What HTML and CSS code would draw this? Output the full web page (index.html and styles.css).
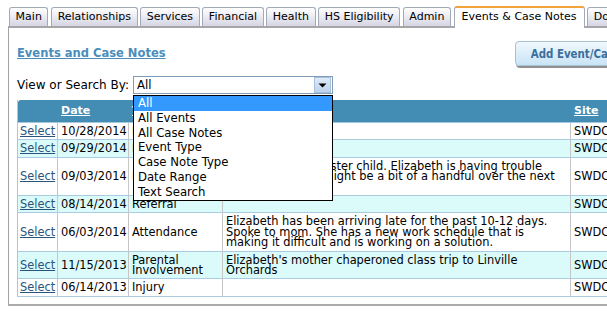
FILE: index.html
```html
<!DOCTYPE html>
<html lang="en">
<head>
<meta charset="utf-8">
<title>Events and Case Notes</title>
<link rel="stylesheet" href="styles.css">
</head>
<body>
<div class="page">
  <div class="tabs">
    <div class="tab">Main</div>
    <div class="tab">Relationships</div>
    <div class="tab">Services</div>
    <div class="tab">Financial</div>
    <div class="tab">Health</div>
    <div class="tab">HS Eligibility</div>
    <div class="tab">Admin</div>
    <div class="tab active">Events &amp; Case Notes</div>
    <div class="tab">Documents</div>
  </div>
  <div class="panel">
    <div class="panel-inner">
      <div class="head-row">
        <a class="title" href="#">Events and Case Notes</a>
        <button class="add-btn" type="button">Add Event/Case Note</button>
      </div>
      <div class="filter-row">
        <span class="filter-label">View or Search By:</span>
        <div class="combo">
          <div class="combo-box">
            <span class="combo-value">All</span>
            <span class="combo-btn"><svg width="9" height="5" viewBox="0 0 9 5"><path d="M0.5 0.5 H8.5 L4.5 4.5 Z" fill="#000"/></svg></span>
          </div>
          <ul class="combo-list">
            <li class="selected">All</li>
            <li>All Events</li>
            <li>All Case Notes</li>
            <li>Event Type</li>
            <li>Case Note Type</li>
            <li>Date Range</li>
            <li>Text Search</li>
          </ul>
        </div>
      </div>
      <table class="grid">
        <colgroup>
          <col class="c-sel"><col class="c-date"><col class="c-type"><col class="c-notes"><col class="c-site">
        </colgroup>
        <thead>
          <tr>
            <th></th>
            <th><a href="#">Date</a></th>
            <th><a href="#">Type</a></th>
            <th><a href="#">Notes</a></th>
            <th><a href="#">Site</a></th>
          </tr>
        </thead>
        <tbody>
          <tr>
            <td><a href="#">Select</a></td><td>10/28/2014</td><td>Incident</td><td></td><td>SWDC</td>
          </tr>
          <tr class="alt">
            <td><a href="#">Select</a></td><td>09/29/2014</td><td>Home Visit</td><td></td><td>SWDC</td>
          </tr>
          <tr>
            <td><a href="#">Select</a></td><td>09/03/2014</td><td>Family Change</td><td>Family took in a foster child. Elizabeth is having trouble adjusting so she might be a bit of a handful over the next few weeks.</td><td>SWDC</td>
          </tr>
          <tr class="alt">
            <td><a href="#">Select</a></td><td>08/14/2014</td><td>Referral</td><td></td><td>SWDC</td>
          </tr>
          <tr>
            <td><a href="#">Select</a></td><td>06/03/2014</td><td>Attendance</td><td>Elizabeth has been arriving late for the past 10-12 days. Spoke to mom. She has a new work schedule that is making it difficult and is working on a solution.</td><td>SWDC</td>
          </tr>
          <tr class="alt">
            <td><a href="#">Select</a></td><td>11/15/2013</td><td>Parental Involvement</td><td>Elizabeth's mother chaperoned class trip to Linville Orchards</td><td>SWDC</td>
          </tr>
          <tr>
            <td><a href="#">Select</a></td><td>06/14/2013</td><td>Injury</td><td></td><td>SWDC</td>
          </tr>
        </tbody>
      </table>
    </div>
  </div>
</div>
</body>
</html>
```

FILE: styles.css
```css
html, body {
  margin: 0;
  padding: 0;
  overflow: hidden;
  background: #ffffff;
}

body {
  font-family: "DejaVu Sans", Verdana, sans-serif;
  font-size: 11px;
  color: #000000;
}

.page {
  width: 760px;
  padding: 6px 0 0 8px;
}

/* ---------- tabs ---------- */
.tabs {
  display: flex;
  align-items: flex-start;
  gap: 2.6px;
  padding-left: 1px;
  height: 20px;
  border-bottom: 2px solid #a6a6a6;
}

.tab {
  flex: none;
  box-sizing: border-box;
  height: 19px;
  margin-top: 1px;
  padding: 0 5.6px;
  border: 1px solid #a2aab8;
  border-bottom: none;
  border-radius: 3px 3px 0 0;
  background: linear-gradient(#ffffff 0%, #ececf3 45%, #d6d6e4 100%);
  line-height: 17px;
  white-space: nowrap;
}

.tab.active {
  position: relative;
  z-index: 1;
  height: 22px;
  margin-top: 0;
  margin-bottom: -2px;
  padding: 0 7px;
  border-top: 2px solid #f2a33a;
  background: #ffffff;
}

/* ---------- panel ---------- */
.panel {
  width: 720px;
  border-left: 1px solid #a3a3a3;
  border-bottom: 2px solid #ababab;
  padding: 13px 0 7px 8px;
}

.panel-inner {
  width: 652px;
}

.head-row {
  display: flex;
  justify-content: space-between;
  align-items: flex-start;
}

.title {
  margin-top: 4px;
  font-family: "DejaVu Sans Condensed", "DejaVu Sans", sans-serif;
  font-weight: bold;
  font-size: 12.8px;
  line-height: 16px;
  color: #4a8dbd;
  text-decoration: underline;
}

.add-btn {
  box-sizing: border-box;
  height: 25px;
  padding: 1px 16px 0 15px;
  border: 1px solid #a8c0d4;
  border-radius: 4px;
  background: linear-gradient(#f0f8fd, #c9e4f5);
  box-shadow: 1px 2px 0 #8f8f8f;
  font-family: "DejaVu Sans Condensed", "DejaVu Sans", sans-serif;
  font-weight: bold;
  font-size: 11.4px;
  line-height: 22px;
  color: #3b6f9c;
}

/* ---------- filter ---------- */
.filter-row {
  display: flex;
  align-items: center;
  gap: 4px;
  margin-top: 10px;
  font-size: 12px;
}

.filter-label {
  line-height: 14px;
}

.combo {
  position: relative;
  width: 200px;
}

.combo-box {
  box-sizing: border-box;
  display: flex;
  align-items: center;
  height: 18px;
  border: 1px solid #7f9db9;
  background: #ffffff;
  font-size: 11.7px;
}

.combo-value {
  flex: 1;
  padding-left: 3px;
  line-height: 16px;
}

.combo-btn {
  box-sizing: border-box;
  display: flex;
  align-items: center;
  justify-content: center;
  width: 17px;
  height: 16px;
  margin-right: 1px;
  border: 1px solid #a9c0dc;
  background: linear-gradient(#dfeaf7, #bcd3ee);
}

.combo-list {
  position: absolute;
  z-index: 5;
  top: 19px;
  left: 0;
  box-sizing: border-box;
  width: 200px;
  margin: 0;
  padding: 0;
  list-style: none;
  border: 1px solid #000000;
  background: #ffffff;
  font-size: 11.7px;
}

.combo-list li {
  height: 14.8px;
  padding-left: 4px;
  line-height: 14.8px;
  white-space: nowrap;
}

.combo-list li.selected {
  background: #3399ff;
  color: #ffffff;
}

/* ---------- grid ---------- */
.grid {
  width: 652px;
  margin-top: 6px;
  table-layout: fixed;
  border-collapse: separate;
  border-spacing: 0;
  border-left: 1px solid #a6c8de;
}

.c-sel { width: 40px; }
.c-date { width: 71px; }
.c-type { width: 94px; }
.c-notes { width: 348px; }
.c-site { width: 98px; }

.grid th {
  height: 12px;
  padding: 5px 3px;
  border-bottom: 1px solid #a6c8de;
  background: #438cb4;
  text-align: left;
  font-size: 11px;
  line-height: 12px;
  font-weight: bold;
}

.grid th:first-child {
  border-top-left-radius: 3px;
}

.grid th a {
  color: #ffffff;
  text-decoration: underline;
}

.grid td {
  padding: 3px 2px 3px 3px;
  border-right: 1px solid #c6c6c6;
  border-bottom: 1px solid #a9cce2;
  font-size: 11.4px;
  line-height: 10.4px;
  vertical-align: middle;
  white-space: normal;
}

.grid td:first-child {
  padding-left: 2px;
}

.grid td:last-child {
  border-right: none;
}

.grid tr.alt td {
  background: #dbfbfb;
}

.grid td a {
  color: #29547c;
  text-decoration: underline;
}
```
